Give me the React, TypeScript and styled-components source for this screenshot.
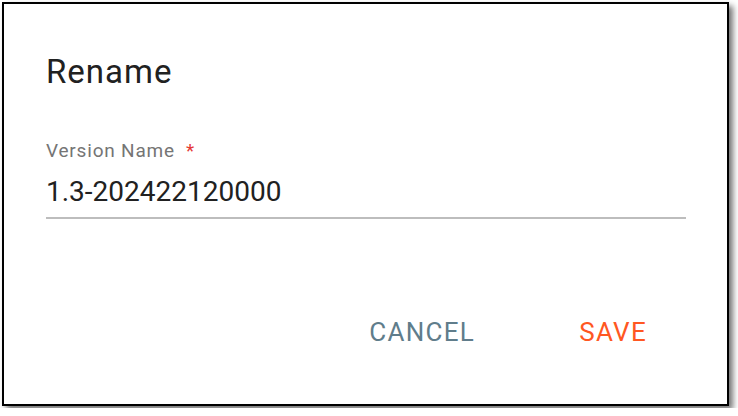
import styled, { createGlobalStyle } from "styled-components";

const GlobalStyle = createGlobalStyle`
  html, body {
    margin: 0;
    padding: 0;
    background: #ffffff;
  }
  body {
    font-family: Roboto, "Liberation Sans", Arial, sans-serif;
  }
`;

const Dialog = styled.div`
  box-sizing: border-box;
  margin: 2px;
  width: 727px;
  height: 404px;
  border: 2px solid #000000;
  background: #ffffff;
  box-shadow: 4px 4px 6px rgba(0, 0, 0, 0.55);
  display: flex;
  flex-direction: column;
`;

const Body = styled.div`
  padding: 50px 41px 0 42px;
  display: flex;
  flex-direction: column;
`;

const Title = styled.h2`
  margin: 0;
  font-size: 33px;
  line-height: 36px;
  font-weight: 400;
  letter-spacing: 1px;
  color: #212121;
`;

const Field = styled.div`
  margin-top: 50px;
  display: flex;
  flex-direction: column;
`;

const Label = styled.label`
  font-size: 19px;
  line-height: 22px;
  letter-spacing: 0.8px;
  color: #757575;
`;

const Required = styled.span`
  color: #e53935;
  margin-left: 11px;
`;

const Input = styled.input`
  margin-top: 13px;
  padding: 0 0 8px 0;
  border: none;
  border-bottom: 2px solid #bdbdbd;
  outline: none;
  font-family: inherit;
  font-size: 28px;
  line-height: 34px;
  color: #212121;
  background: transparent;
`;

const Actions = styled.div`
  margin-top: auto;
  padding: 0 40px 48px 0;
  display: flex;
  justify-content: flex-end;
  gap: 24px;
`;

const ActionButton = styled.button<{ $tone: string }>`
  border: none;
  background: transparent;
  padding: 8px 40px;
  font-family: inherit;
  font-size: 26px;
  line-height: 32px;
  font-weight: 400;
  letter-spacing: 1.3px;
  text-transform: uppercase;
  color: ${(p) => p.$tone};
  cursor: pointer;
`;

export default function App() {
  return (
    <>
      <GlobalStyle />
      <Dialog>
        <Body>
          <Title>Rename</Title>
          <Field>
            <Label>
              Version Name<Required>*</Required>
            </Label>
            <Input defaultValue="1.3-202422120000" />
          </Field>
        </Body>
        <Actions>
          <ActionButton $tone="#607d8b">Cancel</ActionButton>
          <ActionButton $tone="#ff5722">Save</ActionButton>
        </Actions>
      </Dialog>
    </>
  );
}
